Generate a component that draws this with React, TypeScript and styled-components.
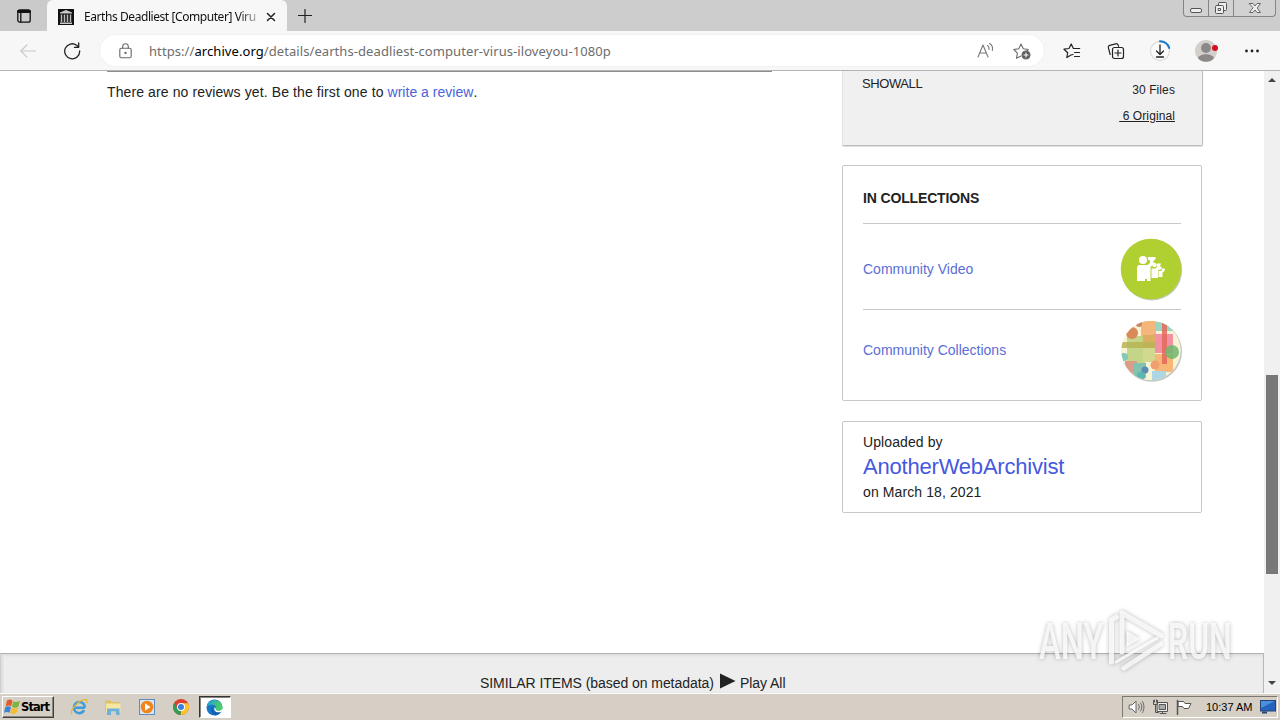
import React from 'react';
import styled, { createGlobalStyle } from 'styled-components';

const GlobalStyle = createGlobalStyle`
  * { box-sizing: border-box; }
  body { margin: 0; background: #fff; overflow: hidden; }
  svg { display: block; flex: none; }
`;

const arial = '"Liberation Sans", Arial, sans-serif';
const segoe = '"Noto Sans", "Open Sans", sans-serif';

const Screen = styled.div`
  width: 1280px;
  height: 720px;
  display: flex;
  flex-direction: column;
  overflow: hidden;
  position: relative;
  font-family: ${arial};
  color: #222;
`;

/* ---------- browser chrome ---------- */
const TabStrip = styled.div`
  height: 31px;
  flex: none;
  display: flex;
  background: #cdcdcd;
`;
const TabActions = styled.div`
  width: 47px;
  padding: 9px 0 0 17px;
  background: #cacaca;
  border-radius: 0 0 6px 0;
`;
const Tab = styled.div`
  width: 240px;
  height: 31px;
  display: flex;
  align-items: center;
  padding: 2px 10px 0 11px;
  background: #f7f7f7;
  border-radius: 6px 6px 0 0;
`;
const TabTitle = styled.div`
  width: 175px;
  margin-left: 10px;
  white-space: nowrap;
  font: 12px/16px ${segoe};
  letter-spacing: -0.43px;
  color: #111;
  -webkit-mask-image: linear-gradient(90deg, #000 154px, rgba(0, 0, 0, 0.35) 172px);
  mask-image: linear-gradient(90deg, #000 154px, rgba(0, 0, 0, 0.35) 172px);
`;
const TabClose = styled.div`
  margin-left: 7px;
`;
const NewTab = styled.div`
  padding: 9px 0 0 11px;
  flex: 1;
`;
const WindowControls = styled.div`
  display: flex;
  width: 93px;
  height: 17px;
  margin-right: 4px;
  border: 1px solid #858585;
  border-top: 0;
  border-radius: 0 0 4px 4px;
  background: #d2d2d2;
`;
const WindowButton = styled.div<{ $w: number }>`
  width: ${(p) => p.$w}px;
  display: flex;
  justify-content: center;
  padding-top: 1px;
  & + & { border-left: 1px solid #858585; }
`;
const Toolbar = styled.div`
  height: 40px;
  flex: none;
  display: flex;
  align-items: center;
  background: #f7f7f7;
  border-bottom: 1px solid #b4b4b4;
`;
const NavButtons = styled.div`
  width: 99px;
  display: flex;
  gap: 26px;
  padding-left: 19px;
`;
const AddressBar = styled.div`
  width: 946px;
  height: 33px;
  display: flex;
  align-items: center;
  padding: 0 13px 0 19px;
  background: #fff;
  border: 1px solid #f1f1f1;
  border-radius: 17px;
`;
const Url = styled.div`
  flex: 1;
  margin-left: 17px;
  white-space: nowrap;
  font: 13px/18px ${segoe};
  letter-spacing: 0.075px;
  color: #6d6d6d;
  b { font-weight: 400; color: #000; }
`;
const BarIcons = styled.div`
  display: flex;
  gap: 18px;
`;
const ToolIcons = styled.div`
  display: flex;
  align-items: center;
  gap: 22px;
  padding-left: 15px;
`;

/* ---------- page ---------- */
const Viewport = styled.div`
  height: 622px;
  flex: none;
  display: flex;
  background: #fff;
`;
const Page = styled.div`
  width: 1264px;
  display: flex;
  flex-direction: column;
`;
const Columns = styled.div`
  height: 582px;
  display: flex;
  padding-left: 107px;
`;
const Reviews = styled.div`
  width: 665px;
  height: 40px;
  margin-right: 70px;
  border-top: 1px solid #8d8d8d;
  font-size: 14px;
  line-height: 20px;
  padding-top: 10px;
  letter-spacing: 0.11px;
`;
const Link = styled.span`
  color: #4b64d8;
  letter-spacing: 0.02px;
`;
const Sidebar = styled.div`
  width: 361px;
  display: flex;
  flex-direction: column;
`;
const Downloads = styled.div`
  height: 75px;
  display: flex;
  justify-content: space-between;
  padding: 4px 27px 0 19px;
  background: #f0f0f0;
  border-right: 1px solid #bcbcbc;
  border-bottom: 1px solid #bcbcbc;
  border-left: 1px solid #e2e2e2;
  border-radius: 0 0 2px 2px;
  box-shadow: 0 1px 1px #ddd;
`;
const ShowAll = styled.div`
  font-size: 13px;
  line-height: 18px;
  letter-spacing: -0.4px;
  word-spacing: -3px;
`;
const FileCounts = styled.div`
  padding-top: 2px;
  text-align: right;
  font-size: 12px;
  line-height: 26px;
  letter-spacing: 0.1px;
  white-space: pre;
`;
const Card = styled.div<{ $top: number; $h: number; $pad?: number }>`
  width: 360px;
  height: ${(p) => p.$h}px;
  margin-top: ${(p) => p.$top}px;
  padding: ${(p) => p.$pad ?? 0}px 20px 0;
  border: 1px solid #c8c8c8;
  border-radius: 2px;
`;
const CardHeading = styled.div`
  height: 58px;
  padding-top: 22px;
  font-size: 14px;
  line-height: 20px;
  font-weight: 700;
  letter-spacing: -0.15px;
  border-bottom: 1px solid #c8c8c8;
`;
const Collection = styled.div<{ $h: number; $drop?: number }>`
  height: ${(p) => p.$h}px;
  margin-right: -2px;
  padding-top: ${(p) => p.$drop ?? 0}px;
  display: flex;
  align-items: center;
  justify-content: space-between;
  font-size: 14px;
  color: #5a6ed6;
`;
const CollectionName = styled.span<{ $raise?: number }>`
  padding-bottom: ${(p) => p.$raise ?? 0}px;
`;
const Rule = styled.div`
  height: 1px;
  background: #c8c8c8;
`;
const SmallLine = styled.div`
  font-size: 14px;
  line-height: 20px;
  letter-spacing: 0.1px;
`;
const Uploader = styled.div`
  font-size: 22px;
  line-height: 30px;
  letter-spacing: -0.2px;
  color: #4558e0;
`;
const Similar = styled.div`
  height: 40px;
  display: flex;
  align-items: flex-start;
  padding: 19px 0 0 479px;
  background: #ededed;
  border-top: 1px solid #b0b0b0;
  border-left: 1px solid #cfcfcf;
  border-right: 1px solid #b8b8b8;
  box-shadow: inset 0 2px 2px #e0e0e0, inset 2px 0 2px #dedede;
  font-size: 14px;
  line-height: 20px;
  letter-spacing: -0.06px;
  white-space: nowrap;
`;
const SimilarLabel = styled.div`
  width: 240px;
`;
const PlayAll = styled.div`
  margin-left: 4px;
`;
const Scrollbar = styled.div`
  width: 16px;
  display: flex;
  flex-direction: column;
  align-items: center;
  padding: 6px 0 7px;
  background: #f0f0f0;
`;
const Thumb = styled.div`
  width: 12px;
  height: 199px;
  margin: 293px 0 auto;
  background: #787878;
`;
const Watermark = styled.div`
  position: absolute;
  left: 1030px;
  top: 600px;
  filter: drop-shadow(0 0 2px rgba(0, 0, 0, 0.34));
  svg { overflow: visible; }
`;

/* ---------- taskbar ---------- */
const Taskbar = styled.div`
  height: 27px;
  flex: none;
  display: flex;
  align-items: flex-start;
  padding: 1px 2px 0;
  background: #d5cfc6;
  border-top: 1px solid #fbfaf8;
`;
const Start = styled.div`
  width: 52px;
  height: 22px;
  margin-top: 1px;
  display: flex;
  align-items: center;
  padding-left: 1px;
  border: 1px solid;
  border-color: #fff #404040 #404040 #fff;
  box-shadow: inset -1px -1px 0 #8a857d;
  font: 700 11.5px/16px "DejaVu Sans", sans-serif;
  letter-spacing: -0.9px;
  color: #000;
`;
const QuickLaunch = styled.div`
  display: flex;
  gap: 16px;
  padding: 3px 0 0 16px;
`;
const ActiveTask = styled.div`
  width: 32px;
  height: 22px;
  margin: 1px 0 0 9px;
  display: flex;
  justify-content: center;
  padding: 2px 1px 0 0;
  background: #fff;
  border: 1px solid;
  border-color: #333 #fff #fff #333;
  box-shadow: inset 1px 1px 0 #8a857d;
`;
const Tray = styled.div`
  width: 156px;
  height: 22px;
  margin: 1px 0 0 auto;
  display: flex;
  align-items: center;
  padding-left: 5px;
  border: 1px solid;
  border-color: #7d7870 #fff #fff #7d7870;
`;
const TrayIcons = styled.div`
  display: flex;
  gap: 7px;
`;
const Clock = styled.div`
  width: 48px;
  margin: 0 6px 0 14px;
  font: 11px/16px "Liberation Sans", Tahoma, sans-serif;
  letter-spacing: 0;
  white-space: nowrap;
  color: #000;
`;

const Stroke = ({ size = 16, w = size, color = '#222', sw = 1.2, children }: {
  size?: number; w?: number; color?: string; sw?: number; children: React.ReactNode;
}) => (
  <svg width={w} height={size} viewBox={`0 0 ${w} ${size}`} fill="none" stroke={color} strokeWidth={sw} strokeLinecap="round" strokeLinejoin="round">
    {children}
  </svg>
);

const ArchiveIcon = () => (
  <svg width="16" height="16" viewBox="0 0 16 16">
    <rect width="16" height="16" fill="#111" />
    <path d="M8 1L14 3.6V4.6H2V3.6z M2 13.6h12v1.4H2z" fill="#ccc" />
    <path d="M3.500 5.500v7.500M6.500 5.500v7.500M9.500 5.500v7.500M12.500 5.500v7.500" stroke="#bbb" strokeWidth="1.500" />
  </svg>
);

const CommunityVideoIcon = () => (
  <svg width="64" height="64" viewBox="0 0 64 64">
    <circle cx="32.8" cy="33" r="30.4" fill="#c4c8b8" />
    <circle cx="32" cy="32" r="30.3" fill="#b0cf30" />
    <g fill="#fff">
      <circle cx="24" cy="23" r="4" />
      <path d="M19.500 28h9l2.500-2v-2.500L29 22.500V20h7l1 1.500-2.500 2.500v3.500l-3 2.500v14h-3.500v-2h-2v2H18V30z" />
      <circle cx="35.500" cy="28" r="2.200" />
      <path d="M32.500 31.500h4l1.500-1.500-.5-2.500 1-1h3.500l-1 2.500v3l-2 1.500V41h-6.500z" />
      <circle cx="41" cy="31" r="1.800" />
      <path d="M39.500 34h3l.5-2.500h3l-.5 2.500-2 1.500V40h-4z" />
    </g>
  </svg>
);

const CommunityCollectionsIcon = () => (
  <svg width="64" height="64" viewBox="0 0 64 64">
    <defs><clipPath id="disc"><circle cx="32" cy="31.500" r="29.700" /></clipPath></defs>
    <circle cx="32.8" cy="32.500" r="30.2" fill="#c3c7c3" />
    <g clipPath="url(#disc)">
      <rect width="64" height="64" fill="#f8f3d4" />
      <rect x="22" y="2" width="15" height="18" fill="#f5b67c" />
      <rect x="36" y="3" width="20" height="9" fill="#9bd4c3" />
      <rect x="34" y="15" width="20" height="19" fill="#f291a2" />
      <rect x="8" y="17" width="18" height="27" fill="#bdd27e" fillOpacity=".9" />
      <rect x="24" y="16" width="13" height="13" fill="#dcae62" />
      <rect x="36" y="35" width="18" height="18" fill="#f7b777" />
      <rect x="24" y="29" width="12" height="14" fill="#d3d890" />
      <rect x="2" y="23" width="35" height="6" fill="#b9b455" fillOpacity=".85" />
      <rect x="43" y="3" width="5" height="42" fill="#e5695b" fillOpacity=".85" />
      <rect x="6" y="42" width="12" height="15" fill="#dc9c88" />
      <rect x="15" y="44" width="12" height="15" fill="#7fc3b0" />
      <rect x="33" y="52" width="14" height="9" fill="#acd6e4" />
      <circle cx="13" cy="14" r="6" fill="#d98a58" />
      <circle cx="20" cy="5" r="3" fill="#c98468" />
      <circle cx="53" cy="33" r="7" fill="#6eb66d" fillOpacity=".85" />
      <circle cx="5" cy="38" r="4" fill="#83c8b8" />
      <circle cx="26" cy="51" r="3.500" fill="#5a8db5" />
      <circle cx="36" cy="46" r="4.500" fill="#f0a070" />
      <circle cx="22" cy="57" r="4" fill="#5cb7b1" />
    </g>
  </svg>
);

export default function App() {
  return (
    <Screen>
      <GlobalStyle />
      <TabStrip>
        <TabActions>
          <Stroke size={14} color="#111" sw={1.3}>
            <rect x="0.8" y="0.8" width="12.400" height="12.400" rx="2" />
            <path d="M1.500 2.500h11" strokeWidth="2.800" />
            <path d="M3.800 4v9" />
          </Stroke>
        </TabActions>
        <Tab>
          <ArchiveIcon />
          <TabTitle>Earths Deadliest [Computer] Viru</TabTitle>
          <TabClose>
            <Stroke size={10} color="#222" sw={1.5}><path d="M1.500 1.500l7 7M8.500 1.500l-7 7" /></Stroke>
          </TabClose>
        </Tab>
        <NewTab>
          <Stroke size={14} color="#222"><path d="M7 .5v13M.5 6.500h13" /></Stroke>
        </NewTab>
        <WindowControls>
          <WindowButton $w={24}>
            <Stroke size={14} w={14} color="#555" sw={1}><rect x="1.500" y="7.500" width="11" height="4" rx="1.500" fill="#eee" /></Stroke>
          </WindowButton>
          <WindowButton $w={25}>
            <Stroke size={14} w={14} color="#555" sw={1}>
              <rect x="4.500" y="1.500" width="8" height="8" rx="1" fill="#eee" />
              <rect x="1.500" y="4.500" width="8" height="8" rx="1" fill="#eee" />
              <rect x="4.500" y="7.500" width="2" height="2" />
            </Stroke>
          </WindowButton>
          <WindowButton $w={42}>
            <Stroke size={14} w={14} color="#666" sw={1}>
              <path d="M1.500 2.500h3.500l2 2.500 2-2.500h3.500l-3.300 4.500 3.300 4.500H9L7 9l-2 2.500H1.500L4.800 7z" fill="#eee" />
            </Stroke>
          </WindowButton>
        </WindowControls>
      </TabStrip>

      <Toolbar>
        <NavButtons>
          <Stroke size={18} color="#c8c8c8"><path d="M16.500 9H2M8 2.800L1.800 9 8 15.200" /></Stroke>
          <Stroke size={18} color="#222" sw={1.300}><path d="M16.700 9A7.500 7.500 0 1 1 13.600 3.200L15.500 5M15.700 1v4.300h-4.300" /></Stroke>
        </NavButtons>
        <AddressBar>
          <Stroke size={16} w={13} color="#6a6a6a" sw={1.1}>
            <rect x=".8" y="5.200" width="11.400" height="9.600" rx="1.500" />
            <path d="M3.700 5V3.500a2.800 2.800 0 0 1 5.600 0V5" />
            <circle cx="6.500" cy="10" r=".6" fill="#6a6a6a" />
          </Stroke>
          <Url>https://<b>archive.org</b>/details/earths-deadliest-computer-virus-iloveyou-1080p</Url>
          <BarIcons>
            <Stroke size={18} color="#777" sw={1.1}>
              <path d="M1 15L6 3l5 12M2.800 11h6.400M10.500 3.500c1.500 1 1.800 2.500 1.500 4M12.500 1.500c3 1.800 3.500 4.500 2.800 7" />
            </Stroke>
            <Stroke size={18} color="#6d6d6d" sw={1.1}>
              <path d="M8 14l-4.500 2.300.9-5.200L.8 7.500l5-.7L8 2l2.300 4.800 5 .7-2 2" />
              <circle cx="13" cy="13" r="4" fill="#5c5c5c" />
              <path d="M13 11v4M11 13h4" stroke="#fff" />
            </Stroke>
          </BarIcons>
        </AddressBar>
        <ToolIcons>
          <Stroke size={18} w={24} color="#222" sw={1.200}>
            <path d="M10.500 12.500L8.500 13l-4.200 2.500.9-4.800L1.500 7.200l5-.7L8.700 2l2.200 4.500h6.300M12 10.500h5M12 14.500h5" transform="translate(2.500 0)" />
          </Stroke>
          <Stroke size={18} w={20} color="#222" sw={1.200}>
            <path d="M4.200 12.500L2.300 5.600a2 2 0 0 1 1.400-2.200l6-1.600a2 2 0 0 1 2.400 1.200l.5 1.300" />
            <rect x="6.500" y="5.500" width="11" height="11" rx="2" />
            <path d="M12 8v6M9 11h6" />
          </Stroke>
          <Stroke size={24} w={24} color="#222" sw={1.300}>
            <circle cx="12" cy="12" r="9.500" stroke="#dedede" fill="#fbfbfb" />
            <path d="M12 2.200A9.800 9.800 0 0 1 21.200 9" stroke="#1a78c8" strokeWidth="2" />
            <path d="M12 6v9M8.500 12l3.500 3.500 3.500-3.500M8.500 18h7" />
          </Stroke>
          <svg width="26" height="24" viewBox="0 0 26 24">
            <circle cx="12" cy="12" r="11" fill="#d3d0cc" />
            <circle cx="12" cy="9" r="5" fill="#8c8888" />
            <path d="M4 19c2-5 14-5 16 0-3 5-13 5-16 0z" fill="#8c8888" />
            <circle cx="21" cy="9" r="3" fill="#d40f1c" />
          </svg>
          <svg width="20" height="4" viewBox="0 0 20 4"><g fill="#222"><circle cx="4.500" cy="2" r="1.400" /><circle cx="10" cy="2" r="1.400" /><circle cx="15.500" cy="2" r="1.400" /></g></svg>
        </ToolIcons>
      </Toolbar>

      <Viewport>
        <Page>
          <Columns>
            <Reviews>There are no reviews yet. Be the first one to <Link>write a review</Link>.</Reviews>
            <Sidebar>
              <Downloads>
                <ShowAll>SHOW ALL</ShowAll>
                <FileCounts>
                  <div>30 Files</div>
                  <div><u> 6 Original</u></div>
                </FileCounts>
              </Downloads>
              <Card $top={19} $h={236}>
                <CardHeading>IN COLLECTIONS</CardHeading>
                <Collection $h={85} $drop={4}>
                  <CollectionName>Community Video</CollectionName>
                  <CommunityVideoIcon />
                </Collection>
                <Rule />
                <Collection $h={81}>
                  <CollectionName $raise={2}>Community Collections</CollectionName>
                  <CommunityCollectionsIcon />
                </Collection>
              </Card>
              <Card $top={20} $h={92} $pad={10}>
                <SmallLine>Uploaded by</SmallLine>
                <Uploader>AnotherWebArchivist</Uploader>
                <SmallLine>on March 18, 2021</SmallLine>
              </Card>
            </Sidebar>
          </Columns>
          <Similar>
            <SimilarLabel>SIMILAR ITEMS (based on metadata)</SimilarLabel>
            <svg width="16" height="16" viewBox="0 0 16 16"><path d="M0 .5L15.500 8 0 15.500z" fill="#222" /></svg>
            <PlayAll>Play All</PlayAll>
          </Similar>
        </Page>
        <Scrollbar>
          <svg width="8" height="5" viewBox="0 0 8 5"><path d="M0 5L4 1l4 4z" fill="#444" /></svg>
          <Thumb />
          <svg width="8" height="5" viewBox="0 0 8 5"><path d="M0 0l4 4 4-4z" fill="#444" /></svg>
        </Scrollbar>
      </Viewport>

      <Taskbar>
        <Start>
          <svg width="17" height="18" viewBox="0 0 17 16">
            <path d="M3 1.500c2.500-1.500 4-1 5.500.2L7.200 7.300c-1.800-1.200-3.500-1-5.500 0z" fill="#e2592c" />
            <path d="M9.200 2.200c1.900 1.200 4 1 6.800-.5l-1.700 6C12 9 10 9 8 7.700z" fill="#7db53c" />
            <path d="M1.300 8.200c2.200-1.300 4-1 5.600.1l-1.300 5.500c-1.700-1.200-3.600-1-5.600 0z" fill="#3d83cf" />
            <path d="M7.700 8.700c1.900 1.200 3.900 1 6.300-.2l-1.500 5.500c-2.200 1.300-4.100 1.200-6.100.2z" fill="#f3bd2d" />
          </svg>
          Start
        </Start>
        <QuickLaunch>
          <svg width="18" height="18" viewBox="0 0 18 18">
            <path d="M14.800 9.800H5.500M14 12.200c-1 2-2.600 3-4.800 3A5.500 5.500 0 0 1 4 9.500C4 6.300 6.200 4 9.300 4c3.400 0 5.500 2.400 5.500 5.800" fill="none" stroke="#3c9cdc" strokeWidth="2.600" />
            <path d="M2 16C-1 13 9 1.500 15.500 1.500c2 0 1.800 2 1 3.700" fill="none" stroke="#e3b93c" strokeWidth="1.300" />
          </svg>
          <svg width="18" height="18" viewBox="0 0 18 18">
            <path d="M1 2.500h5.500l1 1.500H16v10H1z" fill="#dfc264" /><path d="M2 5.500h14.500V14H2z" fill="#f6e6a4" />
            <path d="M3 17v-6.500h12.500V17H12v-3.500H7V17z" fill="#6cb1dc" />
          </svg>
          <svg width="18" height="18" viewBox="0 0 18 18">
            <rect x="1.500" y="1.500" width="15" height="15" fill="#d9e6f2" stroke="#5c8cc0" />
            <circle cx="9" cy="9" r="6.300" fill="#ef8418" /><path d="M7 5.300L12.500 9 7 12.700z" fill="#fff" />
          </svg>
          <svg width="18" height="18" viewBox="0 0 18 18">
            <circle cx="9" cy="9" r="8" fill="#e0402f" />
            <path d="M9 9l-.3 8A8 8 0 0 0 16 5.200H9z" fill="#f8c62c" />
            <path d="M2.100 5l3.500 6 3.200 1.500L8.500 17A8 8 0 0 1 2.100 5z" fill="#2ea04f" />
            <circle cx="9" cy="9" r="4" fill="#fff" /><circle cx="9" cy="9" r="3" fill="#3c7de0" />
          </svg>
        </QuickLaunch>
        <ActiveTask>
          <svg width="17" height="17" viewBox="0 0 17 17">
            <defs><linearGradient id="edge" x1="0" y1="0" x2="1" y2=".3"><stop offset="0" stopColor="#1f9fe0" /><stop offset="1" stopColor="#4ccf5c" /></linearGradient></defs>
            <circle cx="8.500" cy="8.500" r="8" fill="#1878c8" />
            <path d="M.6 8A8 8 0 0 1 16.500 8c0 2.600-2 3.700-4.200 3.700-1.800 0-2.900-.6-2.500-1.400.8-1.600.2-4.300-3-4.600C4 5.500 1.800 6 .6 8z" fill="url(#edge)" />
            <path d="M7 7.500c-1.500 3.500 1.500 7 7.500 5.500-1 2-3 3.200-5 3.400C5 15.500 3.600 10 7 7.500z" fill="#1560ae" />
            <path d="M9.800 10.300c-.4.800.7 1.400 2.500 1.400 1.800 0 3-.6 3.700-1.500l.8 2-2.300.8c-4 1-7-1-6-4.500 1 .2 1.500 1 1.300 1.800z" fill="#fff" />
          </svg>
        </ActiveTask>
        <Tray>
          <TrayIcons>
            <Stroke size={16} w={17} color="#666" sw={1}>
              <path d="M1.500 6h2.500l4-4v12L4 10H1.500z" fill="#fff" /><path d="M10.500 5.500c1 1.500 1 3.500 0 5M12.500 4c1.800 2.500 1.800 5.500 0 8M14.500 2.500c2 3 2 8 0 11" />
            </Stroke>
            <Stroke size={16} color="#555" sw={1}>
              <rect x="5.500" y="3.500" width="10" height="9" fill="#eee" /><rect x="7.500" y="5.500" width="6" height="5" fill="#aaa" />
              <path d="M8 14.500h6M10.500 13v1M1.500 1.500v4h4v-4M3.500 6v7.500h3M2.500 1v2M4.500 1v2" />
            </Stroke>
            <Stroke size={16} w={17} color="#555" sw={1}>
              <path d="M2.500 1.500v14" strokeWidth="1.500" /><path d="M3.500 2.500h5l1.500 2h6l-2.500 5H9l-1.500-2h-4z" fill="#fff" />
            </Stroke>
          </TrayIcons>
          <Clock>10:37 AM</Clock>
          <svg width="16" height="14" viewBox="0 0 16 14">
            <rect x=".5" y=".5" width="15" height="10.500" fill="#2563bd" stroke="#244477" /><path d="M1 1h14L1 8z" fill="#4c90dd" /><path d="M2 12.500h5" stroke="#29476f" strokeWidth="2" />
          </svg>
        </Tray>
      </Taskbar>

      <Watermark>
        <svg width="210" height="80" viewBox="0 0 210 80" fill="none" stroke="#fff" strokeLinejoin="round" strokeLinecap="round">
          <g fill="#fff" fillOpacity=".8" stroke="none" fontFamily="Roboto, sans-serif" fontWeight="500" fontSize="50">
            <text transform="translate(9 59) scale(.655 1)">ANY</text>
            <text transform="translate(138 59) scale(.64 1)">RUN</text>
          </g>
          <g strokeWidth="5" strokeOpacity=".8">
            <path d="M81.500 62V20l5-3" />
            <path d="M92 52V13L131 35.500" />
            <path d="M94 68l37-24" />
            <path d="M86 62l41-24" strokeWidth="3" />
            <path d="M97 32v14l12-7z" fill="#fff" fillOpacity=".8" strokeWidth="1" />
          </g>
        </svg>
      </Watermark>
    </Screen>
  );
}
